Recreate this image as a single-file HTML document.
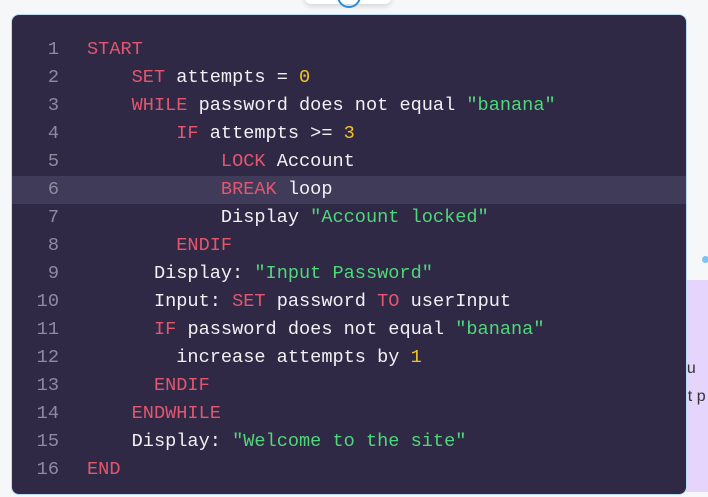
<!DOCTYPE html>
<html><head><style>
html,body{margin:0;padding:0;width:708px;height:497px;overflow:hidden;background:#f6f7f9;font-family:"Liberation Sans",sans-serif}
.tab{position:absolute;left:305px;top:-10px;width:86px;height:14px;background:#fff;border-radius:6px;box-shadow:0 2px 6px rgba(0,0,0,.15)}
.circ{position:absolute;left:337px;top:-16px;width:20px;height:20px;border:2px solid #2a8bd8;border-radius:50%}
.purple{position:absolute;left:640px;top:280px;width:120px;height:212px;background:#e5d4fb;border-radius:30px 0 0 30px}
.dot{position:absolute;left:702px;top:256px;width:7px;height:7px;border-radius:50%;background:#7cc4f4}
.pt{position:absolute;left:670px;font-size:16px;color:#333;white-space:nowrap}
.panel{position:absolute;left:11px;top:14px;width:674px;height:479px;background:#2f2946;border:1px solid #bcdcf4;border-radius:8px;overflow:hidden}
.code{position:absolute;left:0;top:21px;width:100%;font-family:"Liberation Mono",monospace;font-size:18.6px;color:#f1f1f4}
.l{height:28px;line-height:28px;white-space:pre;position:relative}
.l.h{background:#403b58}
.n{position:absolute;left:0;width:47px;text-align:right;color:#8e8aa0}
.t{position:absolute;left:75px}
.k{color:#e2566f}.s{color:#4fd879}.y{color:#f2c626}
</style></head><body>
<div class="tab"></div><div class="circ"></div>
<div class="purple"></div><div class="dot"></div>
<div class="pt" style="top:360px">you</div><div class="pt" style="top:388px">but p</div>
<div class="panel"><div class="code">
<div class="l"><span class="n">1</span><span class="t"><span class="k">START</span></span></div>
<div class="l"><span class="n">2</span><span class="t">    <span class="k">SET</span> attempts = <span class="y">0</span></span></div>
<div class="l"><span class="n">3</span><span class="t">    <span class="k">WHILE</span> password does not equal <span class="s">"banana"</span></span></div>
<div class="l"><span class="n">4</span><span class="t">        <span class="k">IF</span> attempts &gt;= <span class="y">3</span></span></div>
<div class="l"><span class="n">5</span><span class="t">            <span class="k">LOCK</span> Account</span></div>
<div class="l h"><span class="n">6</span><span class="t">            <span class="k">BREAK</span> loop</span></div>
<div class="l"><span class="n">7</span><span class="t">            Display <span class="s">"Account locked"</span></span></div>
<div class="l"><span class="n">8</span><span class="t">        <span class="k">ENDIF</span></span></div>
<div class="l"><span class="n">9</span><span class="t">      Display: <span class="s">"Input Password"</span></span></div>
<div class="l"><span class="n">10</span><span class="t">      Input: <span class="k">SET</span> password <span class="k">TO</span> userInput</span></div>
<div class="l"><span class="n">11</span><span class="t">      <span class="k">IF</span> password does not equal <span class="s">"banana"</span></span></div>
<div class="l"><span class="n">12</span><span class="t">        increase attempts by <span class="y">1</span></span></div>
<div class="l"><span class="n">13</span><span class="t">      <span class="k">ENDIF</span></span></div>
<div class="l"><span class="n">14</span><span class="t">    <span class="k">ENDWHILE</span></span></div>
<div class="l"><span class="n">15</span><span class="t">    Display: <span class="s">"Welcome to the site"</span></span></div>
<div class="l"><span class="n">16</span><span class="t"><span class="k">END</span></span></div>
</div></div>
</body></html>
